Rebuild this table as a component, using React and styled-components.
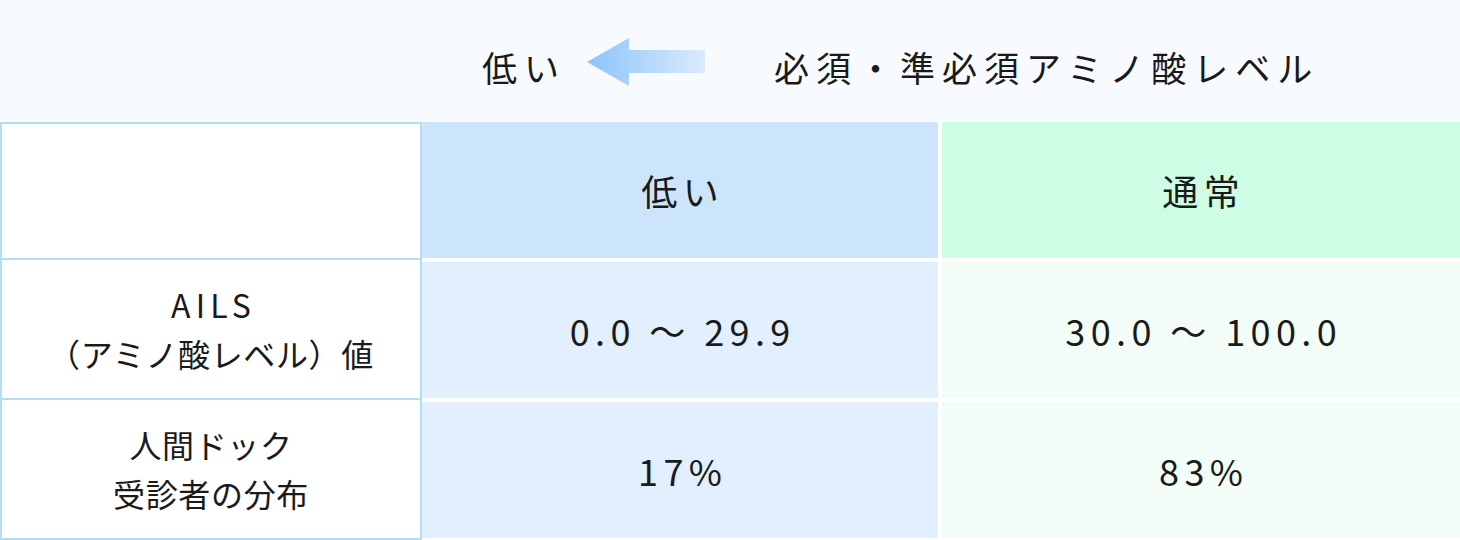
import React from 'react';
import styled, { createGlobalStyle } from 'styled-components';

const colors = {
  pageTop: '#f7fbff',
  border: '#b3def2',
  blueHead: '#cce5fd',
  blueBody: '#e1effe',
  greenHead: '#cdfde4',
  greenBody: '#f3fdf8',
  text: '#1a1a1a'
};

const GlobalStyle = createGlobalStyle`
  html, body {
    margin: 0;
    padding: 0;
    background: #ffffff;
  }
  body {
    font-family: 'Noto Sans CJK JP', 'Noto Sans', sans-serif;
    color: ${colors.text};
  }
`;

const RootDiv = styled.div`
  width: 1460px;
  height: 540px;
  overflow: hidden;
`;

const Legend = styled.div`
  height: 122px;
  background: ${colors.pageTop};
  display: flex;
  align-items: center;
  padding-left: 482px;
  box-sizing: border-box;
`;

const LegendText = styled.span`
  font-size: 35px;
  letter-spacing: 7px;
  line-height: 1;
  margin-top: 10px;
`;

const ArrowWrap = styled.div`
  display: flex;
  margin: 4px 67px 0 21px;
`;

const Table = styled.div`
  display: grid;
  grid-template-columns: 422px 518px 1fr;
  grid-template-rows: 138px 140px 140px;
`;

const LabelCell = styled.div`
  border: 2px solid ${colors.border};
  border-top-width: ${(p) => (p.$first ? '2px' : '0')};
  display: flex;
  flex-direction: column;
  align-items: center;
  justify-content: center;
  font-size: 32px;
  line-height: 49px;
  text-align: center;
`;

const LabelLine = styled.span`
  letter-spacing: ${(p) => (p.$latin ? '0.16em' : '0.02em')};
  padding-left: ${(p) => (p.$latin ? '0.16em' : '0')};
`;

const DataCell = styled.div`
  background: ${(p) => p.$bg};
  background-clip: padding-box;
  border-style: solid;
  border-color: #ffffff;
  border-width: ${(p) => (p.$head ? '0' : '2px')}
    ${(p) => (p.$side === 'left' ? '2px' : '0')} 2px
    ${(p) => (p.$side === 'right' ? '2px' : '0')};
  display: flex;
  align-items: center;
  justify-content: center;
  font-size: 36px;
  letter-spacing: 0.15em;
  padding-left: 0.15em;
`;

const LeftArrow = () => (
  <svg width='120' height='50' viewBox='0 0 120 50'>
    <defs>
      <linearGradient id='arrowFill' x1='0' y1='0' x2='1' y2='0'>
        <stop offset='0' stopColor='#8cc4fb' />
        <stop offset='1' stopColor='#dceafd' />
      </linearGradient>
    </defs>
    <path d='M0 24 L42 0 L42 12 L118 12 L118 35 L42 35 L42 48 Z' fill='url(#arrowFill)' />
  </svg>
);

const rows = [
  {
    label: ['AILS', '（アミノ酸レベル）値'],
    latin: true,
    low: '0.0 〜 29.9',
    normal: '30.0 〜 100.0'
  },
  {
    label: ['人間ドック', '受診者の分布'],
    latin: false,
    low: '17%',
    normal: '83%'
  }
];

const App = () => {
  return (
    <RootDiv>
      <GlobalStyle />
      <Legend>
        <LegendText>低い</LegendText>
        <ArrowWrap>
          <LeftArrow />
        </ArrowWrap>
        <LegendText>必須・準必須アミノ酸レベル</LegendText>
      </Legend>
      <Table>
        <LabelCell $first />
        <DataCell $head $side='left' $bg={colors.blueHead}>
          低い
        </DataCell>
        <DataCell $head $side='right' $bg={colors.greenHead}>
          通常
        </DataCell>
        {rows.map((row) => (
          <React.Fragment key={row.label[0]}>
            <LabelCell>
              <LabelLine $latin={row.latin}>{row.label[0]}</LabelLine>
              <LabelLine>{row.label[1]}</LabelLine>
            </LabelCell>
            <DataCell $side='left' $bg={colors.blueBody}>
              {row.low}
            </DataCell>
            <DataCell $side='right' $bg={colors.greenBody}>
              {row.normal}
            </DataCell>
          </React.Fragment>
        ))}
      </Table>
    </RootDiv>
  );
};

export default App;
